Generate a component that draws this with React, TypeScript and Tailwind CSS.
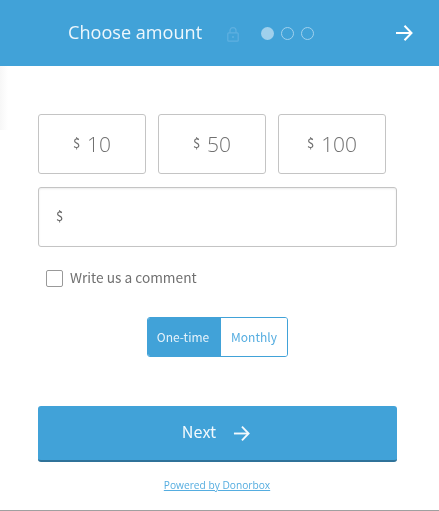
const ArrowIcon = ({ className }: { className: string }) => (
  <svg viewBox="0 0 18 18" fill="none" stroke="currentColor" strokeWidth="2" className={className}>
    <path d="M1 9h15" />
    <path d="M9.5 1.8 16.5 9l-7 7.2" />
  </svg>
);

const LockIcon = () => (
  <svg viewBox="0 0 12 15" fill="none" stroke="#5fb0e0" strokeWidth="1.2" className="h-[15px] w-[12px]">
    <rect x="0.8" y="5.8" width="10.4" height="8.4" rx="1" />
    <path d="M3 5.8V3.6a3 3 0 0 1 6 0v2.2" />
    <circle cx="6" cy="10" r="1" fill="#5fb0e0" stroke="none" />
  </svg>
);

const AmountButton = ({ amount }: { amount: string }) => (
  <div className="flex h-[60px] w-[108px] items-center justify-center gap-[7px] rounded-[3px] border border-[#c4c4c4] text-[#707070]">
    <span className="relative top-[-1px] font-['Noto_Sans_CJK_SC',sans-serif] text-[13px]">$</span>
    <span className="font-['Open_Sans',sans-serif] text-[21px] font-light leading-none">{amount}</span>
  </div>
);

export default function App() {
  return (
    <div className="relative h-[511px] w-[439px] overflow-hidden border-b border-[#a0a0a0] bg-white font-['Open_Sans',sans-serif]">
      <div className="absolute left-0 top-[66px] h-[64px] w-[8px] bg-gradient-to-r from-[#f7f7f7] to-white" />

      <header className="relative flex h-[66px] items-center bg-[#41a2d8] pl-[68px] pr-[26px] text-white">
        <div className="flex flex-1 items-center [will-change:transform]">
          <h1 className="w-[156px] pb-[2px] text-[18.1px] font-normal leading-none text-[#eef7fc]">Choose amount</h1>
          <div className="ml-[3px] mr-[22px] pt-[2px]">
            <LockIcon />
          </div>
          <div className="flex items-center gap-[7px] pt-[1px]">
            <span className="h-[13px] w-[13px] rounded-full bg-[#a0d0ec]" />
            <span className="h-[13px] w-[13px] rounded-full border-[1.5px] border-[#a0d0ec]" />
            <span className="h-[13px] w-[13px] rounded-full border-[1.5px] border-[#a0d0ec]" />
          </div>
          <ArrowIcon className="ml-auto h-[18px] w-[18px]" />
        </div>
      </header>

      <main className="relative flex flex-col px-[38px] pt-[48px] [will-change:transform]">
        <div className="flex gap-[12px]">
          <AmountButton amount="10" />
          <AmountButton amount="50" />
          <AmountButton amount="100" />
        </div>

        <div className="mt-[13px] flex h-[60px] w-[359px] items-center rounded-[3px] border border-[#c4c4c4] pb-[3px] pl-[17px] font-['Noto_Sans_CJK_SC',sans-serif] text-[13px] text-[#666666] shadow-[inset_0_1px_2px_rgba(0,0,0,0.08)]">
          $
        </div>

        <label className="ml-[8px] mt-[23px] flex h-[17px] items-center gap-[7px] font-['Noto_Sans_CJK_SC',sans-serif] text-[13.7px] text-[#707070]">
          <span className="h-[17px] w-[17px] rounded-[2px] border border-[#999999] bg-white" />
          <span className="relative top-[-1px]">Write us a comment</span>
        </label>

        <div className="ml-[109px] mt-[30px] flex h-[40px] w-[141px] overflow-hidden rounded-[3px] border border-[#41a2d8] font-['Noto_Sans_CJK_SC',sans-serif] text-[12px]">
          <span className="flex w-[73px] items-center justify-center bg-[#41a2d8] pr-[3px] text-[#e6f3fb]">One-time</span>
          <span className="flex flex-1 items-center justify-center bg-white text-[#55ade0]">Monthly</span>
        </div>

        <button className="mt-[49px] flex h-[56px] w-[359px] items-center justify-center gap-[17px] rounded-[3px] border-b-2 border-[#2f7299] bg-[#41a2d8] pr-[3px] font-['Noto_Sans_CJK_SC',sans-serif] text-[16.2px] text-[#f2f9fd]">
          <span className="relative top-[-2px]">Next</span>
          <ArrowIcon className="h-[17px] w-[17px]" />
        </button>

        <a className="mt-[16px] self-center pr-[5px] text-[10.2px] leading-[14px] text-[#55ade0] underline">Powered by Donorbox</a>
      </main>
    </div>
  );
}
